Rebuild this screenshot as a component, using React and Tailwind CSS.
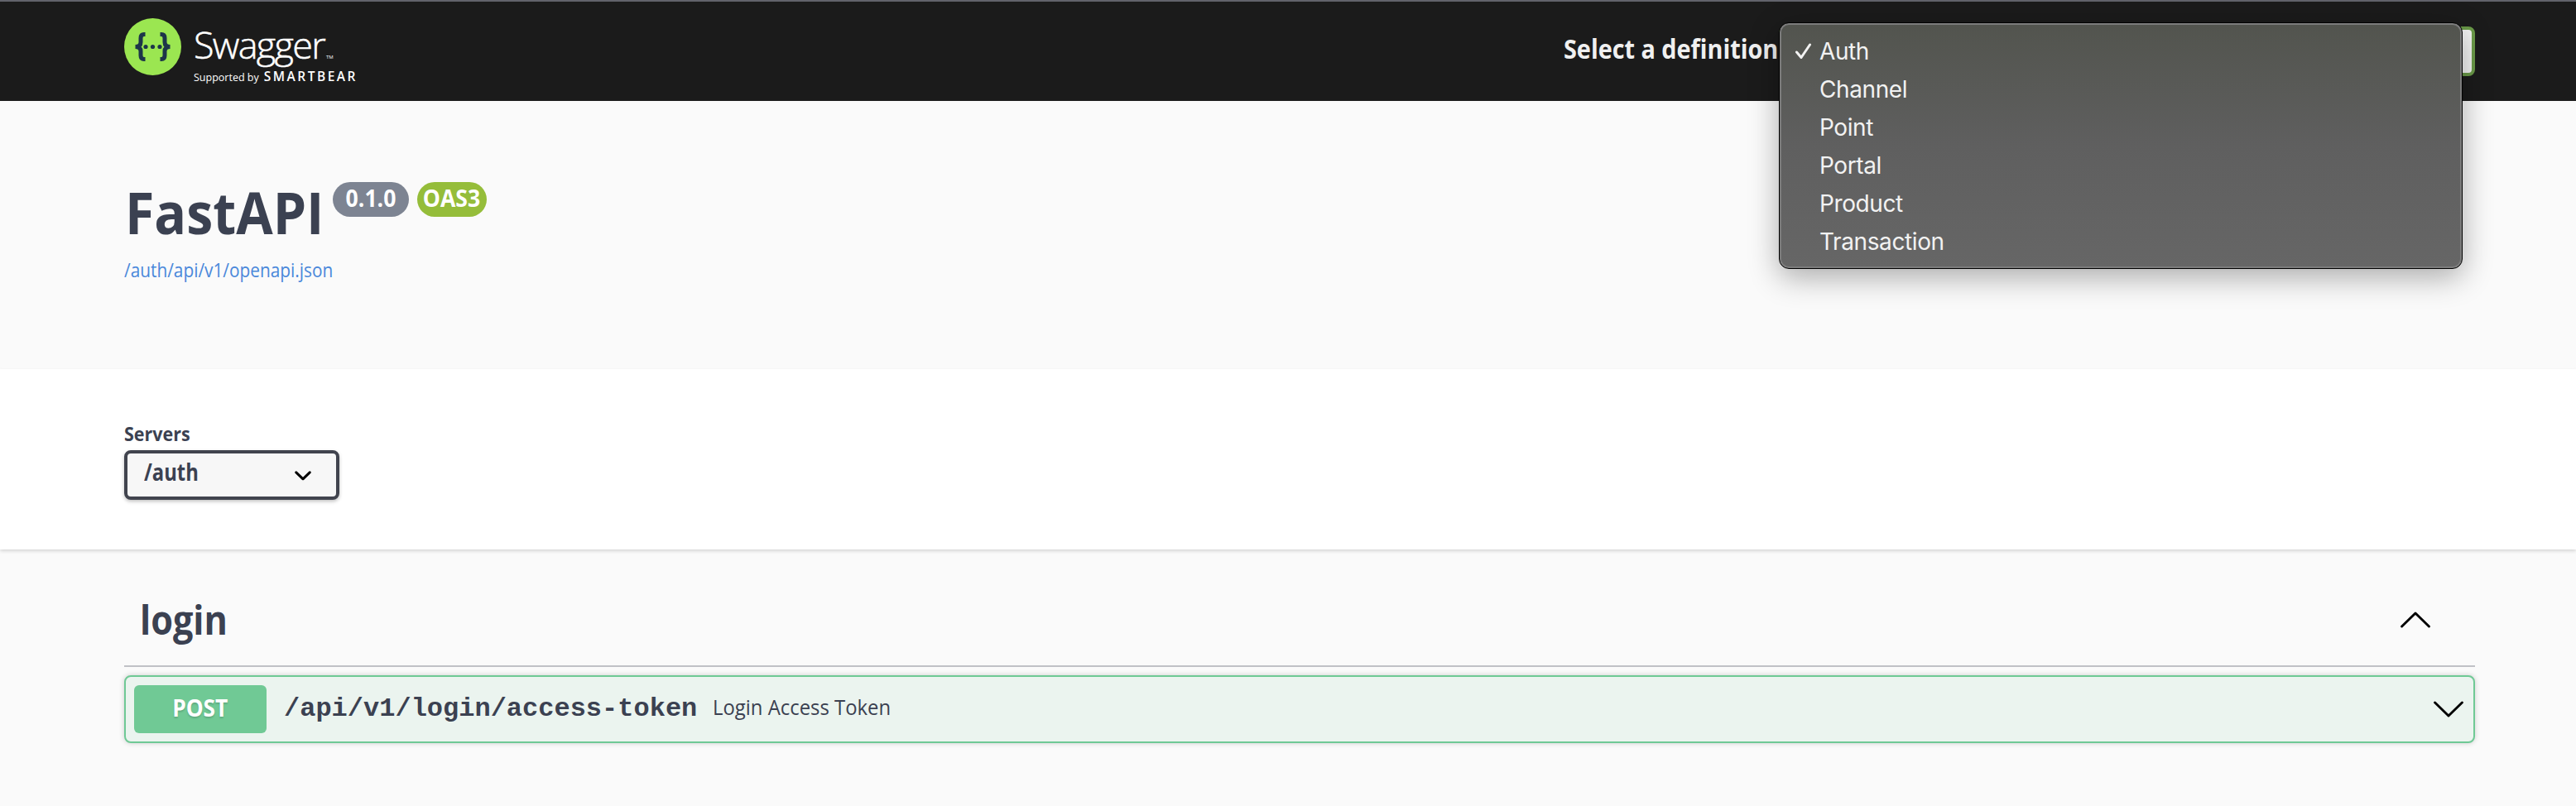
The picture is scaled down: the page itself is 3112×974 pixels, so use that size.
const definitions = ['Auth', 'Channel', 'Point', 'Portal', 'Product', 'Transaction'];

function Chevron({ className, d, width = 3 }) {
  return (
    <svg className={className} viewBox="0 0 34 18" fill="none" stroke="#000" strokeWidth={width} strokeLinecap="round" strokeLinejoin="round">
      <path d={d} />
    </svg>
  );
}

function Logo() {
  return (
    <div className="flex h-[120px]">
      <svg className="mt-5 size-[69px]" viewBox="0 0 69 69">
        <circle cx="34.5" cy="34.5" r="34.5" fill="#9be651" />
        <g fill="none" stroke="#1d3549" strokeWidth="5">
          <path d="M25.5 19.5h-1.5q-4 0-4 4.5v5q0 5.5-6.5 5.5q6.5 0 6.5 5.5v5q0 4.5 4 4.5h1.5" />
          <path d="M43.5 19.5h1.5q4 0 4 4.5v5q0 5.5 6.5 5.5q-6.5 0-6.5 5.5v5q0 4.5-4 4.5h-1.5" />
        </g>
        <g fill="#1d3549">
          <circle cx="26" cy="34.5" r="2.6" />
          <circle cx="34.5" cy="34.5" r="2.6" />
          <circle cx="43" cy="34.5" r="2.6" />
        </g>
      </svg>
      <div className="ml-[15px] flex flex-col pt-5 text-white">
        <div className="flex h-[58px] items-start">
          <span className="text-[45px] leading-[63px] font-light tracking-[-1.7px] [-webkit-text-stroke:0.5px_white]">Swagger</span>
          <span className="mt-[43px] ml-[2px] text-[6px] leading-[8px]">TM</span>
        </div>
        <div className="flex h-6 items-baseline leading-6 whitespace-nowrap">
          <span className="text-[12.5px] tracking-[0px]">Supported by</span>
          <span className="ml-[6px] text-[15.5px] font-semibold tracking-[2.5px]">SMARTBEAR</span>
        </div>
      </div>
    </div>
  );
}

function DefinitionMenu() {
  return (
    <div className="absolute top-[-5px] left-0 h-[298px] w-[826px] rounded-[12px] border border-black bg-linear-to-b from-[#52544e] via-[#5f5f5f] to-[#666666] pt-[11px] shadow-[0_10px_36px_rgba(0,0,0,0.32)] inset-ring-2 inset-ring-[#7c7c7c]">
      {definitions.map((name, i) => (
        <div key={name} className="flex h-[46px] items-center pl-[19px] font-[Inter,sans-serif] text-[28px] leading-[46px] tracking-[-0.4px] text-[#f2f2f2]">
          <span className="flex w-[29px]">
            {i === 0 && (
              <svg className="h-5 w-5" viewBox="0 0 20 20" fill="none" stroke="#f2f2f2" strokeWidth="3" strokeLinecap="round" strokeLinejoin="round">
                <path d="M1.5 11L7 17.5L17.5 2" />
              </svg>
            )}
          </span>
          <span>{name}</span>
        </div>
      ))}
    </div>
  );
}

export default function App() {
  return (
    <div className="h-[974px] w-[3112px] overflow-hidden bg-[#fafafa] font-['Open_Sans',sans-serif] text-[#3b4151]">
      <header className="flex h-[122px] justify-between border-t-2 border-[#62636b] bg-[#1b1b1b] pr-[122px] pl-[150px]">
        <Logo />
        <div className="flex pt-[30px]">
          <span className="mr-[3px] w-[257px] origin-left scale-x-[0.9] text-[32px] leading-[54px] font-bold whitespace-nowrap text-[#f0f0f0]">Select a definition</span>
          <div className="relative z-10 h-[60px] w-[841px] rounded-[8px] border-4 border-[#6b9b49] bg-[#f4f4f4]">
            <div className="absolute -top-1 -left-1">
              <DefinitionMenu />
            </div>
          </div>
        </div>
      </header>

      <section className="h-[324px] px-[150px] pt-[98px]">
        <div className="flex h-[90px] items-start">
          <h1 className="ml-px w-[251px] origin-left scale-x-[0.92] text-[70px] leading-[72px] font-bold whitespace-nowrap">FastAPI</h1>
          <span className="flex h-[42px] w-[92px] justify-center rounded-full bg-[#7d8492] text-[28px] leading-[38px] font-bold text-white"><span className="scale-x-[0.95]">0.1.0</span></span>
          <span className="ml-[10px] flex h-[42px] w-[84px] justify-center rounded-full bg-[#95bd3a] text-[28px] leading-[38px] font-bold text-white"><span className="scale-x-[0.95]">OAS3</span></span>
        </div>
        <a className="block w-[300px] origin-left scale-x-[0.868] text-[24px] leading-[32px] text-[#4a88da]">/auth/api/v1/openapi.json</a>
      </section>

      <section className="relative h-[218px] bg-white px-[150px] pt-[62px] shadow-[0_2px_4px_rgba(0,0,0,0.15)]">
        <div className="h-9 w-[100px] origin-left scale-x-[0.895] text-[24px] leading-[32px] font-bold">Servers</div>
        <div className="flex h-[60px] w-[260px] items-center justify-between rounded-[8px] border-4 border-[#41444e] bg-[#f7f7f7] pr-[30px] pl-5 shadow-[0_2px_4px_rgba(0,0,0,0.25)]">
          <span className="mb-[8px] origin-left scale-x-[0.85] text-[28px] leading-[44px] font-bold">/auth</span>
          <Chevron className="mt-[1px] h-[12px] w-[20px]" d="M3 2L17 15.5L31 2" width={5} />
        </div>
      </section>

      <main className="pr-[122px] pl-[150px]">
        <div className="flex h-[142px] items-center justify-between border-b-2 border-[#c0c1c6] pr-[54px] pl-[18px]">
          <h2 className="mt-[29px] ml-px origin-left scale-x-[0.9] text-[48px] leading-[56px] font-bold">login</h2>
          <Chevron className="mt-[29px] h-[20px] w-[36px]" d="M1.5 16.5L17 1.5L32.5 16.5" width={2.8} />
        </div>
        <div className="mt-[10px] flex h-[82px] items-center rounded-[8px] border-2 border-[#6fc995] bg-[#ebf4ef] pr-[12px] pl-[10px] shadow-[0_0_6px_rgba(0,0,0,0.19)]">
          <span className="flex h-[58px] w-[160px] justify-center rounded-[6px] bg-[#70c995] text-[28px] leading-[54px] font-bold text-white [text-shadow:0_2px_2px_rgba(0,0,0,0.15)]"><span className="scale-x-[0.94]">POST</span></span>
          <span className="ml-[21px] w-[518px] font-['Liberation_Mono',monospace] text-[32px] leading-9 font-bold">/api/v1/login/access-token</span>
          <span className="mb-[7px] origin-left scale-x-[0.955] text-[25px] leading-9">Login Access Token</span>
          <Chevron className="ml-auto h-[20px] w-[36px]" d="M1.5 1.5L17 16.5L32.5 1.5" width={2.8} />
        </div>
      </main>
    </div>
  );
}
